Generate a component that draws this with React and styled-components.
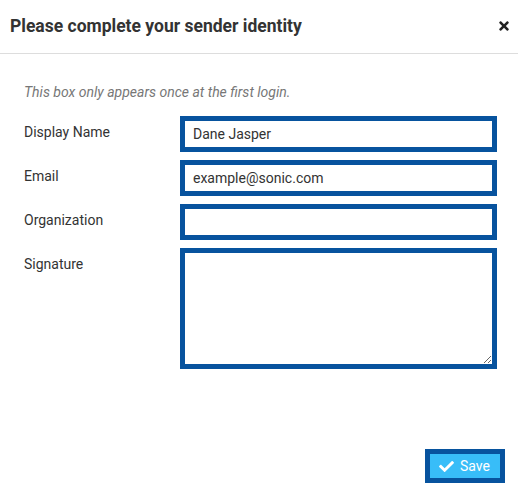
import React, { useState } from 'react';
import styled, { createGlobalStyle } from 'styled-components';
import { FaTimes, FaCheck } from 'react-icons/fa';

const GlobalStyle = createGlobalStyle`
  html, body {
    margin: 0;
    padding: 0;
    background: #ffffff;
  }
  * {
    box-sizing: border-box;
  }
`;

const FIELDS = [
  { id: 'name', label: 'Display Name', initial: 'Dane Jasper' },
  { id: 'email', label: 'Email', initial: 'example@sonic.com' },
  { id: 'org', label: 'Organization', initial: '' },
];

const App = () => {
  const [values, setValues] = useState(
    FIELDS.reduce((acc, f) => ({ ...acc, [f.id]: f.initial }), {})
  );
  const [signature, setSignature] = useState('');

  const onChange = id => e => setValues(v => ({ ...v, [id]: e.target.value }));

  return (
    <>
      <GlobalStyle />
      <Modal>
        <Header>
          <Title>Please complete your sender identity</Title>
          <CloseBtn type="button" aria-label="close">
            <FaTimes size={14} />
          </CloseBtn>
        </Header>
        <Body>
          <Note>This box only appears once at the first login.</Note>
          <Form>
            {FIELDS.map(({ id, label }) => (
              <React.Fragment key={id}>
                <Label htmlFor={id}>{label}</Label>
                <Input id={id} value={values[id]} onChange={onChange(id)} />
              </React.Fragment>
            ))}
            <Label htmlFor="signature">Signature</Label>
            <TextArea
              id="signature"
              value={signature}
              onChange={e => setSignature(e.target.value)}
            />
          </Form>
        </Body>
        <Footer>
          <SaveBtn type="button">
            <FaCheck size={15} />
            Save
          </SaveBtn>
        </Footer>
      </Modal>
    </>
  );
};

export default App;

const Modal = styled.div`
  display: flex;
  flex-direction: column;
  height: 491px;
  font-family: Roboto, 'Liberation Sans', sans-serif;
  color: #333333;
`;

const Header = styled.div`
  display: flex;
  justify-content: space-between;
  align-items: center;
  height: 54px;
  padding: 0 7px 2px 10px;
  border-bottom: 1px solid #dddddd;
`;

const Title = styled.h4`
  margin: 0;
  font-size: 17.5px;
  font-weight: 700;
  color: #333333;
`;

const CloseBtn = styled.button`
  display: flex;
  align-items: center;
  padding: 0;
  border: none;
  background: none;
  color: #222222;
  cursor: pointer;
`;

const Body = styled.div`
  padding: 29px 21px 0 24px;
`;

const Note = styled.p`
  margin: 0 0 15px;
  font-size: 14px;
  line-height: 18px;
  font-style: italic;
  color: #777777;
`;

const Form = styled.div`
  display: grid;
  grid-template-columns: 156px 1fr;
  row-gap: 8px;
`;

const Label = styled.label`
  padding-top: 6px;
  font-size: 14px;
  line-height: 20px;
  color: #333333;
`;

const Input = styled.input`
  width: 100%;
  height: 36px;
  padding: 0 8px;
  border: 5px solid #07539e;
  border-radius: 0;
  font-family: inherit;
  font-size: 14px;
  color: #333333;
  outline: none;
`;

const TextArea = styled.textarea`
  width: 100%;
  height: 121px;
  padding: 6px 8px;
  border: 5px solid #07539e;
  border-radius: 0;
  font-family: inherit;
  font-size: 14px;
  color: #333333;
  outline: none;
`;

const Footer = styled.div`
  display: flex;
  justify-content: flex-end;
  margin-top: auto;
  padding: 0 13px 8px;
`;

const SaveBtn = styled.button`
  display: flex;
  align-items: center;
  gap: 6px;
  height: 34px;
  padding: 0 10px 0 9px;
  border: 5px solid #07539e;
  border-radius: 0;
  background-color: #38bdf8;
  color: #ffffff;
  font-family: inherit;
  font-size: 14px;
  cursor: pointer;
`;
